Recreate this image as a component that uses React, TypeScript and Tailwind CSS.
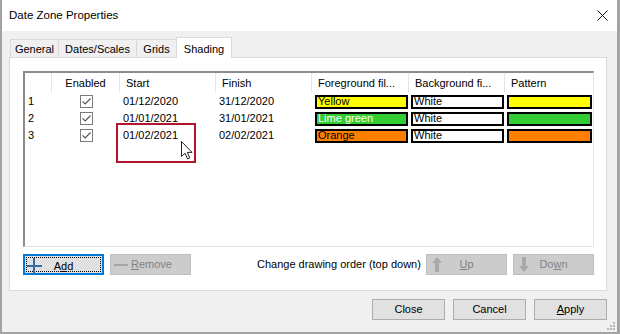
import React from 'react'

const font = { fontFamily: '"Liberation Sans", Arial, sans-serif' }

const rows = [
  { n: '1', start: '01/12/2020', finish: '31/12/2020', fg: 'Yellow', fgBg: 'bg-[#ffff00]', fgText: 'text-black', pat: 'bg-[#ffff00]' },
  { n: '2', start: '01/01/2021', finish: '31/01/2021', fg: 'Lime green', fgBg: 'bg-[#32cd32]', fgText: 'text-white', pat: 'bg-[#32cd32]' },
  { n: '3', start: '01/02/2021', finish: '02/02/2021', fg: 'Orange', fgBg: 'bg-[#ff8000]', fgText: 'text-black', pat: 'bg-[#ff8000]' },
]

const cols = 'grid grid-cols-[27px_68px_96px_96px_97px_96px_1fr]'

function Check() {
  return (
    <div className="flex h-[13px] w-[13px] items-center justify-center border border-[#7a7a7a] bg-white">
      <svg width="11" height="11" viewBox="0 0 11 11">
        <path d="M1.5 5.3 L4.2 8 L9.5 2.5" fill="none" stroke="#555" strokeWidth="1.2" />
      </svg>
    </div>
  )
}

function Plus() {
  return (
    <svg width="16" height="16" viewBox="0 0 16 16">
      <path d="M0 8 H15 M7 0 V16" stroke="#3a69a8" strokeWidth="2" />
    </svg>
  )
}

function Minus() {
  return (
    <svg width="16" height="16" viewBox="0 0 16 16">
      <path d="M1 8 H15" stroke="#a6a6a6" strokeWidth="2" />
    </svg>
  )
}

function Arrow({ down }: { down?: boolean }) {
  return (
    <svg width="10" height="15" viewBox="0 0 10 15">
      <path
        d={down ? 'M5 15 L10 9 L7 9 L7 0 L3 0 L3 9 L0 9 Z' : 'M5 0 L10 6 L7 6 L7 15 L3 15 L3 6 L0 6 Z'}
        fill="#a9a9a9"
      />
    </svg>
  )
}

function DisabledBtn({ icon, label, width }: { icon: React.ReactNode; label: React.ReactNode; width: string }) {
  return (
    <div className={`${width} grid h-[21px] grid-cols-[20px_1fr_20px] items-center border border-[#bfbfbf] bg-[#cccccc] text-[11px] text-[#838383]`}>
      <div className="flex justify-center">{icon}</div>
      <div className="text-center">{label}</div>
      <div />
    </div>
  )
}

function Btn({ children }: { children: React.ReactNode }) {
  return (
    <div className="flex h-[21px] w-[73px] items-center justify-center border border-[#adadad] bg-[#e1e1e1] text-[11px] text-black">
      {children}
    </div>
  )
}

function Tab({ label, w, selected }: { label: string; w: string; selected?: boolean }) {
  if (selected)
    return (
      <div className={`${w} relative z-10 -mb-px flex h-[21px] items-start justify-center border border-b-0 border-[#d9d9d9] bg-white pt-[3px]`}>
        {label}
      </div>
    )
  return (
    <div className={`${w} -mr-px flex h-[18px] items-center justify-center border border-b-0 border-[#d9d9d9] bg-[#f0f0f0] pt-px`}>
      {label}
    </div>
  )
}

export default function App() {
  return (
    <div style={font} className="relative flex h-[334px] w-[620px] flex-col border-b-2 border-l-2 border-r-[3px] border-[#a3a3a3] bg-[#f0f0f0] text-[11px] text-black">
      {/* title bar */}
      <div className="flex h-[31px] shrink-0 items-center justify-between bg-white pl-[7px] pr-[9px]">
        <span className="text-[11.5px]">Date Zone Properties</span>
        <svg width="11" height="11" viewBox="0 0 11 11">
          <path d="M0.5 0.5 L10.5 10.5 M10.5 0.5 L0.5 10.5" stroke="#111" strokeWidth="1" />
        </svg>
      </div>

      <div className="flex flex-1 flex-col pl-[7px] pr-[10px] pt-[6px]">
        {/* tabs */}
        <div className="flex items-end pl-[1px]">
          <Tab label="General" w="w-[49px]" />
          <Tab label="Dates/Scales" w="w-[79px]" />
          <Tab label="Grids" w="w-[41px]" />
          <Tab label="Shading" w="w-[56px]" selected />
        </div>

        {/* panel */}
        <div className="flex h-[234px] flex-col border border-[#d9d9d9] bg-white pl-[13px] pr-[12px] pt-[13px]">
          <div className="relative h-[176px] border-b border-l-2 border-r border-t-2 border-b-[#e3e3e3] border-l-[#8c8c8c] border-r-[#e3e3e3] border-t-[#8c8c8c] bg-white">
            <div className={`${cols} h-[20px] items-center`}>
              <div className="h-full border-r border-[#e5e5e5]" />
              <div className="flex h-full items-center justify-center border-r border-[#e5e5e5]">Enabled</div>
              <div className="flex h-full items-center border-r border-[#e5e5e5] pl-[6px]">Start</div>
              <div className="flex h-full items-center border-r border-[#e5e5e5] pl-[6px]">Finish</div>
              <div className="flex h-full items-center border-r border-[#e5e5e5] pl-[6px]">Foreground fil...</div>
              <div className="flex h-full items-center border-r border-[#e5e5e5] pl-[6px]">Background fi...</div>
              <div className="flex h-full items-center pl-[6px]">Pattern</div>
            </div>
            {rows.map((r) => (
              <div key={r.n} className={`${cols} h-[17px] items-center`}>
                <div className="pl-[3px]">{r.n}</div>
                <div className="flex justify-center">
                  <Check />
                </div>
                <div className="pl-[3px]">{r.start}</div>
                <div className="pl-[3px]">{r.finish}</div>
                <div className="pl-[3px] pr-px">
                  <div className={`flex h-[14px] items-center border-2 border-black pl-[1px] leading-none ${r.fgBg} ${r.fgText}`}>{r.fg}</div>
                </div>
                <div className="pl-[2px] pr-px">
                  <div className="flex h-[14px] items-center border-2 border-black bg-white pl-[1px] leading-none">White</div>
                </div>
                <div className="pl-[2px] pr-px">
                  <div className={`h-[14px] border-2 border-black ${r.pat}`} />
                </div>
              </div>
            ))}

            {/* selection highlight + cursor */}
            <div className="absolute left-[91px] top-[50px] h-[40px] w-[80px] border-2 border-[#b3152e]" />
            <svg className="absolute left-[156px] top-[68px]" width="13" height="19" viewBox="0 0 13 19">
              <path d="M0.5 0.5 L0.5 15.5 L4 12.2 L6.6 18 L8.8 17 L6.3 11.4 L11 11.4 Z" fill="#fff" stroke="#222" strokeWidth="1" strokeLinejoin="round" />
            </svg>
          </div>

          {/* list buttons */}
          <div className="mt-[7px] flex items-center">
            <div className="h-[21px] w-[81px] border-2 border-[#0078d7] bg-[#e1e1e1] p-px">
              <div className="grid h-full grid-cols-[20px_1fr_20px] items-center border border-dotted border-black">
                <div className="flex">
                  <Plus />
                </div>
                <div className="text-center">
                  A<span className="underline">d</span>d
                </div>
                <div />
              </div>
            </div>
            <div className="ml-[6px]">
              <DisabledBtn width="w-[81px]" icon={<Minus />} label={<><span className="underline">R</span>emove</>} />
            </div>
            <div className="ml-[66px] whitespace-nowrap">Change drawing order (top down)</div>
            <div className="ml-auto flex gap-[6px]">
              <DisabledBtn width="w-[81px]" icon={<Arrow />} label={<><span className="underline">U</span>p</>} />
              <DisabledBtn width="w-[81px]" icon={<Arrow down />} label={<>Do<span className="underline">w</span>n</>} />
            </div>
          </div>
        </div>

        {/* dialog buttons */}
        <div className="mt-[8px] flex justify-end gap-[8px]">
          <Btn>Close</Btn>
          <Btn>Cancel</Btn>
          <Btn>
            <span className="underline">A</span>pply
          </Btn>
        </div>
      </div>

      {/* resize grip */}
      <svg className="absolute bottom-[1px] right-[1px]" width="10" height="10" viewBox="0 0 10 10">
        {[
          [8, 2], [8, 5], [8, 8], [5, 5], [5, 8], [2, 8],
        ].map(([x, y]) => (
          <rect key={`${x}-${y}`} x={x - 1} y={y - 1} width="2" height="2" fill="#b8b8b8" />
        ))}
      </svg>
    </div>
  )
}
